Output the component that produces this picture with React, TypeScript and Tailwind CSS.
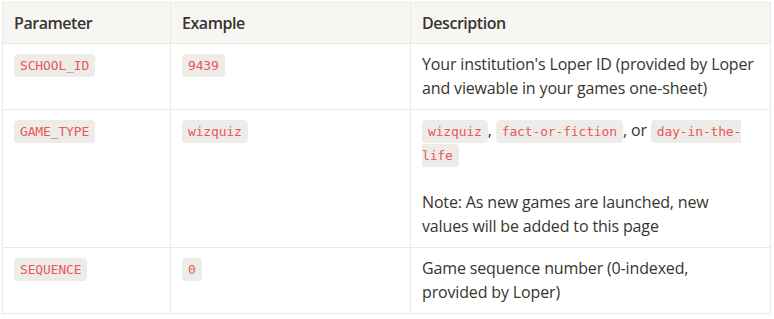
import React from "react";

function Code({ children }: { children: React.ReactNode }) {
  return (
    <code
      className="rounded-[4px] bg-[#edece9] px-[6px] py-[4px] text-[13px] leading-none text-[#eb5757]"
      style={{ fontFamily: '"DejaVu Sans Mono", monospace' }}
    >
      {children}
    </code>
  );
}

function Cell({ children, head = false }: { children?: React.ReactNode; head?: boolean }) {
  return (
    <div
      className={
        head
          ? "border-r border-b border-[#e9e9e7] bg-[#f7f6f3] px-[11px] pt-2 pb-2 font-semibold tracking-[-0.45px]"
          : "border-r border-b border-[#e9e9e7] px-[11px] pt-2 pb-[9px]"
      }
    >
      {children}
    </div>
  );
}

export default function App() {
  return (
    <div className="w-[774px] h-[319px] bg-white pl-[2px] pt-[2px]">
      <div
        className="grid w-[769px] grid-cols-[168px_240px_360px] border-l border-t border-[#e9e9e7] text-[16px] leading-[24px] tracking-[-0.15px] text-[#37352f]"
        style={{ fontFamily: '"Open Sans", sans-serif' }}
      >
        <Cell head>Parameter</Cell>
        <Cell head>Example</Cell>
        <Cell head>Description</Cell>

        <Cell><Code>SCHOOL_ID</Code></Cell>
        <Cell><Code>9439</Code></Cell>
        <Cell>
          Your institution's Loper ID (provided by Loper
          <br />
          and viewable in your games one-sheet)
        </Cell>

        <Cell><Code>GAME_TYPE</Code></Cell>
        <Cell><Code>wizquiz</Code></Cell>
        <Cell>
          <Code>wizquiz</Code>, <Code>fact-or-fiction</Code>, or <Code>day-in-the-<br />life</Code>
          <br />
          <br />
          Note: As new games are launched, new
          <br />
          values will be added to this page
        </Cell>

        <Cell><Code>SEQUENCE</Code></Cell>
        <Cell><Code>0</Code></Cell>
        <Cell>
          Game sequence number (0-indexed,
          <br />
          provided by Loper)
        </Cell>
      </div>
    </div>
  );
}
